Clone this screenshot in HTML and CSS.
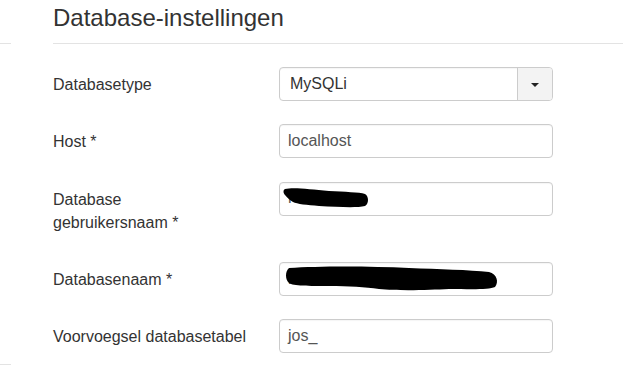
FILE: index.html
```html
<!DOCTYPE html>
<html lang="nl">
<head>
<meta charset="utf-8">
<title>Database-instellingen</title>
<link rel="stylesheet" href="styles.css">
</head>
<body>
<div class="page">
  <aside class="side">
    <div class="side-rule side-rule-top"></div>
    <div class="side-rule side-rule-bottom"></div>
  </aside>
  <main class="main">
    <h3 class="title">Database-instellingen</h3>
    <form class="form">
      <div class="row">
        <label class="label">Databasetype</label>
        <div class="control">
          <div class="select">
            <span class="select-value">MySQLi</span>
            <span class="select-btn"><span class="caret"></span></span>
          </div>
        </div>
      </div>
      <div class="row">
        <label class="label">Host *</label>
        <div class="control"><div class="input">localhost</div></div>
      </div>
      <div class="row">
        <label class="label">Database<br>gebruikersnaam *</label>
        <div class="control">
          <div class="input">r</div>
          <svg class="redact" width="274" height="34" viewBox="0 0 274 34">
            <path d="M6 7 C14 5 30 7 50 9 C66 10 80 10 86 12 C90 14 90 22 86 24 C78 26 60 25 40 24 C28 23 18 22 14 20 C10 18 8 15 6 13 C4 11 4 8 6 7 Z" fill="#000"/>
          </svg>
        </div>
      </div>
      <div class="row">
        <label class="label">Databasenaam *</label>
        <div class="control">
          <div class="input">r</div>
          <svg class="redact" width="274" height="34" viewBox="0 0 274 34">
            <path d="M10 6 C40 4 90 4 130 6 C160 7 190 8 210 10 C218 12 220 20 216 25 C210 28 190 27 170 27 C150 28 120 29 100 27 C86 25 70 24 50 24 C30 24 14 24 10 21 C6 18 6 9 10 6 Z" fill="#000"/>
          </svg>
        </div>
      </div>
      <div class="row">
        <label class="label">Voorvoegsel databasetabel</label>
        <div class="control"><div class="input">jos_</div></div>
      </div>
    </form>
  </main>
</div>
</body>
</html>
```
FILE: styles.css
```css
* { box-sizing: border-box; }
html, body {
  margin: 0;
  padding: 0;
  background: #fff;
}
body {
  font-family: "Liberation Sans", Arial, sans-serif;
  color: #333;
  font-size: 16px;
  line-height: 1.42857;
}
.page {
  display: flex;
  width: 623px;
  height: 370px;
  overflow: hidden;
}
.side {
  width: 11px;
  flex: none;
  display: flex;
  flex-direction: column;
}
.side-rule {
  border-top: 1px solid #e3e3e3;
}
.side-rule-top { margin-top: 43px; }
.side-rule-bottom { margin-top: 320px; }
.main {
  margin-left: 42px;
  flex: 1;
}
.title {
  margin: 0;
  padding: 5px 0 12px;
  font-size: 24px;
  line-height: 26px;
  font-weight: normal;
  color: #333;
  border-bottom: 1px solid #e3e3e3;
}
.form {
  padding-top: 23px;
}
.row {
  display: grid;
  grid-template-columns: 226px 274px;
  align-items: start;
  margin-bottom: 23.33px;
}
.label {
  padding-top: 6px;
  margin-bottom: 5px;
  line-height: 23px;
  color: #333;
}
.control {
  position: relative;
}
.input, .select {
  height: 34px;
  border: 1px solid #ccc;
  border-radius: 4px;
  background: #fff;
  color: #555;
  padding: 0 8px;
  display: flex;
  align-items: center;
  box-shadow: inset 0 1px 1px rgba(0,0,0,0.04);
}
.select {
  padding: 0;
  overflow: hidden;
}
.select-value {
  flex: 1;
  padding: 0 10px;
  color: #333;
}
.select-btn {
  width: 35px;
  height: 100%;
  background: #f3f3f3;
  border-left: 1px solid #ccc;
  display: flex;
  align-items: center;
  justify-content: center;
}
.caret {
  width: 0;
  height: 0;
  border-left: 4px solid transparent;
  border-right: 4px solid transparent;
  border-top: 4px solid #222;
  margin-top: 1px;
}
.redact {
  position: absolute;
  left: 0;
  top: 0;
  display: block;
}
```
